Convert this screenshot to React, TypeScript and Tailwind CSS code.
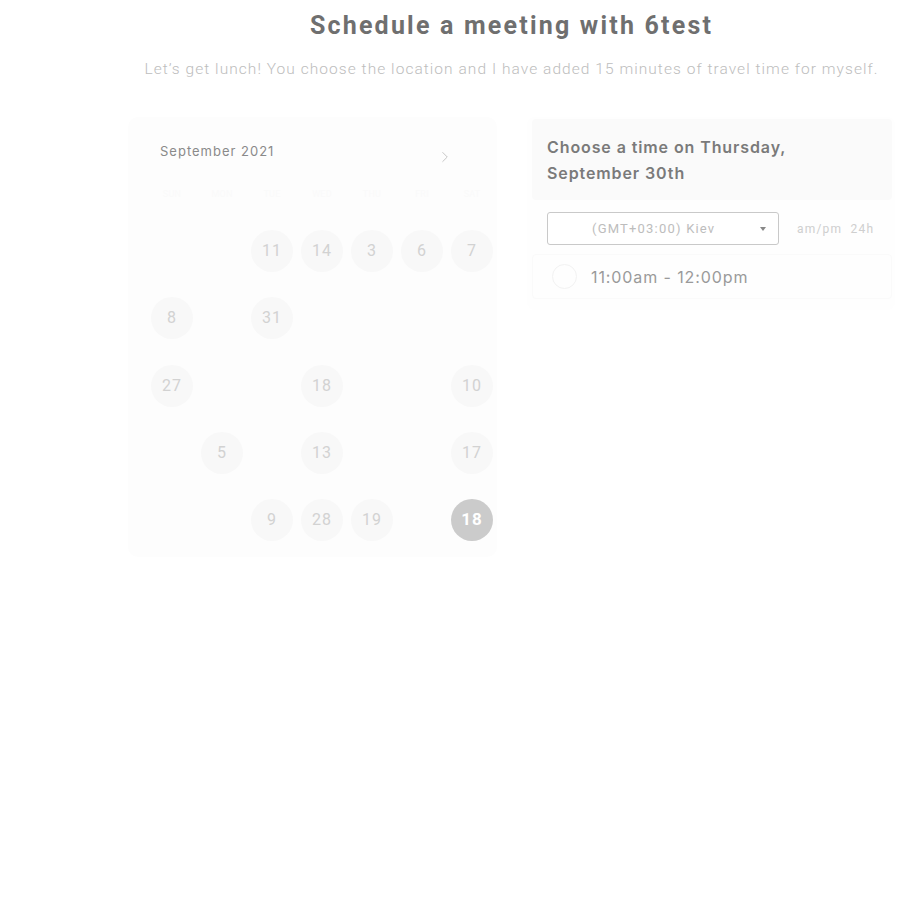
import { ChevronRight } from 'lucide-react'

// 5 rows x 7 columns, null = empty cell
const WEEKS: (number | null)[][] = [
  [null, null, 11, 14, 3, 6, 7],
  [8, null, 31, null, null, null, null],
  [27, null, null, 18, null, null, 10],
  [null, 5, null, 13, null, null, 17],
  [null, null, 9, 28, 19, null, 18],
]

const DAYS = ['SUN', 'MON', 'TUE', 'WED', 'THU', 'FRI', 'SAT']

function DayCell({ day, selected }: { day: number | null; selected: boolean }) {
  return (
    <div className="flex h-[67.25px] w-[50px] items-center justify-center">
      {day !== null && (
        <div
          className={
            selected
              ? 'flex h-[42px] w-[42px] items-center justify-center rounded-full bg-[#cbcbcb] text-[17px] font-bold tracking-[1px] text-white'
              : 'flex h-[42px] w-[42px] items-center justify-center rounded-full bg-[#f8f8f8] text-[16px] tracking-[1px] text-[#d2d2d2]'
          }
        >
          {day}
        </div>
      )}
    </div>
  )
}

export default function App() {
  return (
    <div className="min-h-[900px] w-[900px] bg-white font-['Roboto',sans-serif]">
      <div className="ml-[128px] flex w-[767px] flex-col">
        <h1 className="pt-[11px] text-center text-[25px] font-bold leading-[30px] tracking-[2.2px] text-[#6f6f6f]">
          Schedule a meeting with 6test
        </h1>
        <p className="mt-[18px] text-center text-[15.5px] font-light leading-[20px] tracking-[1.05px] text-[#bdbdbd]">
          Let’s get lunch! You choose the location and I have added 15 minutes of travel time for myself.
        </p>

        <div className="mt-[38px] flex gap-[30px]">
          {/* Calendar */}
          <div className="flex h-[440px] w-[369px] flex-col rounded-[10px] bg-[#fdfdfd] pl-[19px]">
            <div className="flex items-center justify-between pt-[21px] pr-[43px] pl-[13px]">
              <span className="font-['Inter',sans-serif] text-[13px] tracking-[1px] text-[#8a8a8a]">September 2021</span>
              <ChevronRight className="mt-[10px] h-[18px] w-[18px] text-[#c4c4c4]" strokeWidth={1.3} />
            </div>
            <div className="mt-[22px] grid grid-cols-7 text-center text-[9px] tracking-wide text-[#fafafa]">
              {DAYS.map((d) => (
                <span key={d} className="w-[50px]">
                  {d}
                </span>
              ))}
            </div>
            <div className="mt-[16px] flex flex-col">
              {WEEKS.map((week, wi) => (
                <div key={wi} className="flex">
                  {week.map((day, di) => (
                    <DayCell key={di} day={day} selected={wi === 4 && di === 6} />
                  ))}
                </div>
              ))}
            </div>
          </div>

          {/* Time picker */}
          <div className="flex h-[193px] w-[368px] flex-col rounded-[8px] bg-[#fefefe] pt-[2px] pl-[5px]">
            <div className="mr-[3px] rounded-[4px] bg-[#fafafa] px-[15px] pt-[15px] pb-[14px] font-['Inter',sans-serif] text-[16px] font-semibold leading-[26px] tracking-[0.9px] text-[#7a7a7a]">
              Choose a time on Thursday,
              <br />
              September 30th
            </div>
            <div className="mt-[12px] flex items-center pl-[15px]">
              <div className="relative flex h-[33px] w-[232px] items-center rounded-[3px] border border-[#c9c9c9] bg-white">
                <span className="ml-[44px] text-[13px] tracking-[1.2px] text-[#bdbdbd]">(GMT+03:00) Kiev</span>
                <span className="absolute right-[12px] top-[14px] h-0 w-0 border-x-[3px] border-t-[4px] border-x-transparent border-t-[#888]" />
              </div>
              <span className="ml-[18px] text-[12px] tracking-[1.2px] text-[#cfcfcf]">am/pm&nbsp;&nbsp;24h</span>
            </div>
            <div className="mt-[9px] mr-[3px] flex h-[45px] items-center rounded-[4px] border border-[#fafafa] pl-[19px]">
              <div className="h-[25px] w-[25px] rounded-full border border-[#f2f2f2]" />
              <span className="ml-[14px] font-['Inter',sans-serif] text-[16px] tracking-[0.9px] text-[#9a9a9a]">11:00am - 12:00pm</span>
            </div>
          </div>
        </div>
      </div>
    </div>
  )
}
